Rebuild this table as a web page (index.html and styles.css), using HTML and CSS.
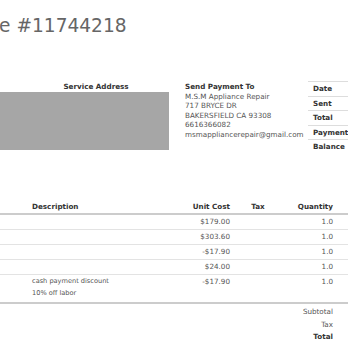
FILE: index.html
```html
<!DOCTYPE html>
<html>
<head>
<meta charset="utf-8">
<link rel="stylesheet" href="styles.css">
</head>
<body>
<div class="page">
  <h1 class="title">Invoice #11744218</h1>
  <div class="top">
    <div class="service">
      <div class="col-head center">Service Address</div>
      <div class="redact"></div>
    </div>
    <div class="send">
      <div class="col-head">Send Payment To</div>
      <div>M.S.M Appliance Repair</div>
      <div>717 BRYCE DR</div>
      <div>BAKERSFIELD CA 93308</div>
      <div>6616366082</div>
      <div>msmappliancerepair@gmail.com</div>
    </div>
    <div class="summary">
      <div class="srow"><span class="slabel">Date</span></div>
      <div class="srow"><span class="slabel">Sent</span></div>
      <div class="srow"><span class="slabel">Total</span></div>
      <div class="srow"><span class="slabel">Payment</span></div>
      <div class="srow"><span class="slabel">Balance</span></div>
    </div>
  </div>
  <table class="items">
    <colgroup>
      <col class="c1"><col class="c2"><col class="c3"><col class="c4"><col class="c5"><col class="c6">
    </colgroup>
    <thead>
      <tr><th></th><th class="l">Description</th><th class="r">Unit Cost</th><th class="c">Tax</th><th class="r">Quantity</th><th></th></tr>
    </thead>
    <tbody>
      <tr><td></td><td></td><td class="r">$179.00</td><td></td><td class="r">1.0</td><td></td></tr>
      <tr><td></td><td></td><td class="r">$303.60</td><td></td><td class="r">1.0</td><td></td></tr>
      <tr><td></td><td></td><td class="r">-$17.90</td><td></td><td class="r">1.0</td><td></td></tr>
      <tr><td></td><td></td><td class="r">$24.00</td><td></td><td class="r">1.0</td><td></td></tr>
      <tr class="nob"><td></td><td class="note">cash payment discount</td><td class="r">-$17.90</td><td></td><td class="r">1.0</td><td></td></tr>
      <tr class="last"><td></td><td class="note">10% off labor</td><td></td><td></td><td></td><td></td></tr>
    </tbody>
  </table>
  <div class="totals">
    <div>Subtotal</div>
    <div>Tax</div>
    <div class="bold">Total</div>
  </div>
</div>
</body>
</html>
```

FILE: styles.css
```css
html, body {
  margin: 0;
  padding: 0;
  overflow: hidden;
  background: #fff;
}
body {
  font-family: "DejaVu Sans", Verdana, sans-serif;
  font-size: 7.2px;
  line-height: 9.6px;
  color: #555;
}
.page {
  margin-left: -60px;
  width: 470px;
}
.title {
  margin: 15px 0 0 0;
  padding-left: 4px;
  font-size: 18.6px;
  line-height: 21px;
  font-weight: normal;
  color: #666;
}
.top {
  display: flex;
  align-items: flex-start;
  margin-top: 46px;
  height: 73px;
}
.col-head {
  font-weight: bold;
  color: #333;
}
.center { text-align: center; }
.service {
  width: 148px;
  margin-left: 82px;
}
.redact {
  margin-left: -40px;
  width: 187px;
  height: 58px;
  background: #a6a6a6;
}
.send {
  margin-left: 15px;
  width: 123px;
}
.summary {
  margin-top: -1px;
  width: 102px;
}
.srow {
  border-top: 1px solid #ddd;
  height: 13.6px;
  line-height: 13.6px;
  padding-left: 5px;
}
.slabel {
  font-weight: bold;
  color: #333;
}
.items {
  margin-top: 45px;
  width: 470px;
  table-layout: fixed;
  border-collapse: collapse;
}
.c1 { width: 86px; }
.c2 { width: 124px; }
.c3 { width: 86px; }
.c4 { width: 44px; }
.c5 { width: 59px; }
.c6 { width: 71px; }
.items th {
  font-weight: bold;
  color: #333;
  height: 13px;
  padding: 0 6px;
  border-bottom: 2px solid #ccc;
}
.items td {
  height: 14px;
  padding: 0 6px;
  border-bottom: 1px solid #e3e3e3;
}
.items tr.nob td { border-bottom: none; }
.items tr.last td {
  height: 13px;
  border-bottom: 2px solid #ccc;
  vertical-align: top;
}
.l { text-align: left; }
.r { text-align: right; }
.c { text-align: center; }
.note {
  font-size: 6.6px;
}
.totals {
  margin-top: 2px;
  width: 399px;
  text-align: right;
  padding-right: 6px;
  box-sizing: border-box;
  line-height: 12.5px;
}
.bold {
  font-weight: bold;
  color: #333;
}
```
